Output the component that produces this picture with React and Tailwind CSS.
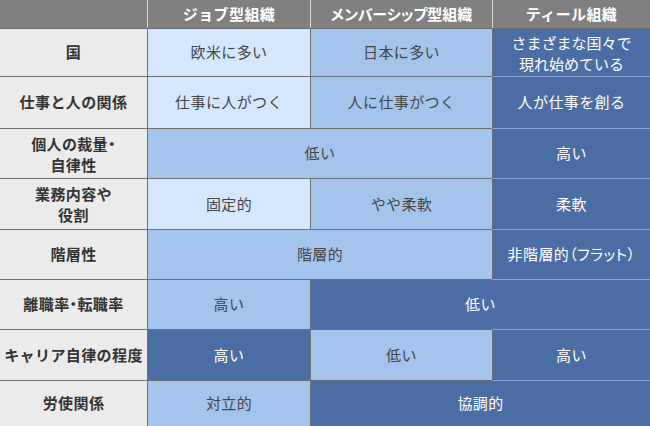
const G = '#6f6f6f'
const LB = '#86a8d3'

const L = 'bg-[#d5e7fc] text-[#454545]'
const M = 'bg-[#a3c5eb] text-[#454545]'
const D = 'bg-[#4a6ea3] text-white'

// each cell: text, tone, span, top / bottom / left border colour, p = proportional punctuation
const rows = [
  {
    head: '国',
    cells: [
      { t: '欧米に多い', c: L, bt: G, bl: G },
      { t: '日本に多い', c: M, bt: G, bl: G },
      { t: ['さまざまな国々で', '現れ始めている'], c: D, bt: G, bl: G, tight: true },
    ],
    top: true,
  },
  {
    head: '仕事と人の関係',
    cells: [
      { t: '仕事に人がつく', c: L, bt: G, bl: G },
      { t: '人に仕事がつく', c: M, bt: G, bl: G },
      { t: '人が仕事を創る', c: D, bt: LB, bl: G },
    ],
    top: true,
  },
  {
    head: ['個人の裁量・', '自律性'],
    p: true,
    cells: [
      { t: '低い', c: M, span: 2, bt: G, bl: G },
      { t: '高い', c: D, bt: LB, bl: G },
    ],
    top: true,
  },
  {
    head: ['業務内容や', '役割'],
    cells: [
      { t: '固定的', c: L, bt: G, bl: G },
      { t: 'やや柔軟', c: M, bt: G, bl: G },
      { t: '柔軟', c: D, bt: LB, bl: G },
    ],
    top: true,
  },
  {
    head: '階層性',
    cells: [
      { t: '階層的', c: M, span: 2, bt: G, bb: G, bl: G },
      { t: '非階層的（フラット）', c: D, bt: LB, bb: LB, bl: G, p: true },
    ],
    top: true,
    bottom: true,
  },
  {
    head: '離職率・転職率',
    p: true,
    cells: [
      { t: '高い', c: M, bl: G },
      { t: '低い', c: D, span: 2, bl: G },
    ],
  },
  {
    head: 'キャリア自律の程度',
    cells: [
      { t: '高い', c: D, bt: G, bb: G, bl: G },
      { t: '低い', c: M, bt: G, bb: G, bl: G },
      { t: '高い', c: D, bt: LB, bb: LB, bl: G },
    ],
    top: true,
    bottom: true,
  },
  {
    head: '労使関係',
    cells: [
      { t: '対立的', c: M, bl: G },
      { t: '協調的', c: D, span: 2, bl: G },
    ],
  },
]

function Lines({ t }) {
  if (!Array.isArray(t)) return <span>{t}</span>
  return (
    <span className="flex flex-col items-center leading-[21px]">
      {t.map(s => <span key={s}>{s}</span>)}
    </span>
  )
}

function Cell({ cell, row }) {
  const style = {
    borderTop: row.top ? `1px solid ${cell.bt || G}` : undefined,
    borderBottom: row.bottom ? `1px solid ${cell.bb || G}` : undefined,
    borderLeft: `1px solid ${cell.bl || G}`,
  }
  return (
    <div
      className={`${cell.c} ${cell.span === 2 ? 'col-span-2' : ''} ${cell.p ? '[font-feature-settings:"palt"]' : ''} ${cell.tight ? 'tracking-normal' : ''} flex items-center justify-center text-center`}
      style={style}
    >
      <Lines t={cell.t} />
    </div>
  )
}

const heads = [
  { t: 'ジョブ型組織' },
  { t: 'メンバーシップ型組織', p: true },
  { t: 'ティール組織' },
]

export default function App() {
  return (
    <div
      className="w-[650px] h-[426px] overflow-hidden bg-white text-[15px] tracking-[0.4px]"
      style={{ fontFamily: '"Noto Sans CJK JP", "Noto Sans", sans-serif' }}
    >
      <div className="grid grid-cols-[147px_163px_182px_158px] grid-rows-[28px_48px_52px_50px_51px_51px_49px_52px_45px]">
        {/* header */}
        <div className="bg-[#808080]" />
        {heads.map(h => (
          <div
            key={h.t}
            className={`bg-[#808080] border-l border-[#d8d8d8] flex items-center justify-center font-bold text-white ${h.p ? '[font-feature-settings:"palt"] tracking-normal' : ''}`}
          >
            {h.t}
          </div>
        ))}

        {rows.map((row, i) => (
          <div key={i} className="contents">
            <div
              className={`bg-[#ebebeb] text-[#333] font-bold flex items-center justify-center text-center ${row.p ? '[font-feature-settings:"palt"]' : ''}`}
              style={{
                borderTop: row.top ? `1px solid ${G}` : undefined,
                borderBottom: row.bottom ? `1px solid ${G}` : undefined,
              }}
            >
              <Lines t={row.head} />
            </div>
            {row.cells.map((cell, j) => <Cell key={j} cell={cell} row={row} />)}
          </div>
        ))}
      </div>
    </div>
  )
}
